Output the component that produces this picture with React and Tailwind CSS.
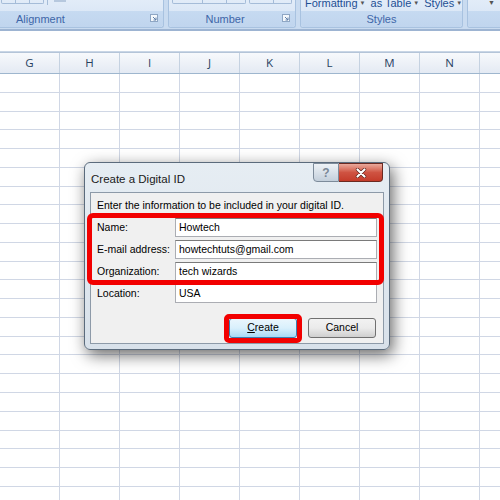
import React from 'react';

const cols = ['G', 'H', 'I', 'J', 'K', 'L', 'M', 'N', ''];
const rows = Array.from({ length: 23 });

const font = { fontFamily: '"Liberation Sans", Arial, sans-serif' };

const Launcher = ({ className }) => (
  <svg className={className} width="8" height="8" viewBox="0 0 8 8">
    <rect x="0.5" y="0.5" width="7" height="7" fill="#f4f8fc" stroke="#8ea6c4" />
    <path d="M3 3 L6 6 M6 3.5 V6 H3.5" stroke="#5f7fa8" strokeWidth="1" fill="none" />
  </svg>
);

const RibbonGroup = ({ label, className, labelClass = 'text-center', children, launcher }) => (
  <div className={`relative h-[28px] rounded-b-[3px] border border-t-0 border-[#a8c2e0] bg-gradient-to-b from-[#e2ecf8] to-[#d3e2f4] ${className}`}>
    {children}
    <div className={`absolute bottom-0 left-0 right-0 h-[16px] rounded-b-[3px] bg-gradient-to-b from-[#c6daf1] to-[#c0d5ee] text-[11px] leading-[16px] text-[#3e66a8] ${labelClass}`}>
      {label}
    </div>
    {launcher && <Launcher className="absolute right-[5px] bottom-[5px]" />}
  </div>
);

const Ribbon = () => (
  <div className="h-[31px] bg-[#c9dbf0] border-b-2 border-[#9db4d2] flex gap-[4px] overflow-hidden" style={font}>
    <RibbonGroup label="Alignment" className="w-[168px] -ml-[4px] shrink-0" labelClass="pl-[19px]" launcher>
      <div className="absolute left-[4px] top-0 w-[43px] h-[4px] border border-t-0 border-[#a5bcd8] rounded-b-[2px] flex">
        <div className="w-[14px] border-r border-[#a5bcd8]" />
        <div className="w-[14px] border-r border-[#a5bcd8]" />
      </div>
      <div className="absolute left-[50px] top-0 w-px h-[5px] bg-[#a5bcd8]" />
      <div className="absolute left-[57px] top-0 w-[12px] h-[2px] bg-[#b6c8de]" />
    </RibbonGroup>
    <RibbonGroup label="Number" className="w-[128px] shrink-0" labelClass="text-center pr-[14px]" launcher>
      <div className="absolute left-[3px] top-0 w-[74px] h-[4px] border border-t-0 border-[#a5bcd8] rounded-b-[2px] flex">
        <div className="w-[30px] border-r border-[#a5bcd8]" />
        <div className="w-[24px] border-r border-[#a5bcd8]" />
      </div>
      <div className="absolute left-[80px] top-0 w-[43px] h-[4px] border border-t-0 border-[#a5bcd8] rounded-b-[2px] flex">
        <div className="w-[24px] border-r border-[#a5bcd8]" />
      </div>
    </RibbonGroup>
    <RibbonGroup label="Styles" className="w-[163px] shrink-0">
      <div className="absolute left-[4px] top-[-4px] flex items-center gap-[2px] text-[11px] leading-[14px] text-[#1e4f94] whitespace-nowrap">
        <span>Formatting</span>
        <span className="text-[6px] text-[#555]">▼</span>
        <span className="ml-[3px]">as Table</span>
        <span className="text-[6px] text-[#555]">▼</span>
        <span className="ml-[3px]">Styles</span>
        <span className="text-[6px] text-[#555]">▼</span>
      </div>
    </RibbonGroup>
    <RibbonGroup label="" className="w-[60px] shrink-0">
      <div className="absolute left-[20px] top-[-2px] text-[7px] text-[#555]">▼</div>
    </RibbonGroup>
  </div>
);

const Sheet = () => (
  <div style={{ fontFamily: '"Open Sans", Arial, sans-serif' }}>
    <div className="h-[20px] bg-white" />
    <div className="h-[2px] bg-[#b4c4d8] border-t border-[#c9d6e6]" />
    <div className="flex h-[21px] border-b border-[#9eb6ce] bg-gradient-to-b from-[#f7f9fc] to-[#e4eaf3]">
      {cols.map((c, i) => (
        <div key={i} className="w-[60px] shrink-0 border-r border-[#c5d2e1] flex items-center justify-center text-[11.5px] text-[#27415f]">
          {c}
        </div>
      ))}
    </div>
    {rows.map((_, r) => (
      <div key={r} className="flex h-[18.78px] border-b border-[#d0d7e5] bg-white">
        {cols.map((c, i) => (
          <div key={i} className="w-[60px] shrink-0 border-r border-[#d0d7e5]" />
        ))}
      </div>
    ))}
  </div>
);

const Field = ({ label, value }) => (
  <div className="flex items-center h-[19px]">
    <div className="w-[78px] shrink-0 text-[10.5px] text-black">{label}</div>
    <div className="flex-1 h-[19px] bg-white border border-[#abadb3] border-t-[#7a7a7a] px-[3px] flex items-center text-[10.5px] text-black">
      {value}
    </div>
  </div>
);

const Dialog = () => (
  <div
    className="absolute left-[84px] top-[162px] w-[306px] h-[188px] rounded-[6px] border border-[#5b6b7c] bg-gradient-to-b from-[#e6edf3] to-[#d8e1ea] shadow-[3px_5px_16px_rgba(0,0,0,0.6)]"
    style={font}
  >
    <div className="h-[29px] flex items-start">
      <div className="pl-[6px] pt-[8px] text-[11.5px] text-[#1a1a1a] flex-1">Create a Digital ID</div>
      <div className="flex mr-[6px]">
        <div className="w-[26px] h-[19px] rounded-bl-[4px] border border-[#7d8b9a] bg-gradient-to-b from-[#eef2f6] to-[#c3cfdb] flex items-center justify-center text-[12px] font-bold text-[#7a8796]">
          ?
        </div>
        <div className="w-[44px] h-[19px] rounded-br-[4px] border border-l-0 border-[#6b2a22] bg-gradient-to-b from-[#e9a99c] via-[#cf5342] to-[#c43b2a] flex items-center justify-center">
          <svg width="12" height="10" viewBox="0 0 12 10">
            <path d="M2.5 1.5 L9.5 8.5 M9.5 1.5 L2.5 8.5" stroke="#5a1e16" strokeWidth="3.4" strokeLinecap="round" />
            <path d="M2.5 1.5 L9.5 8.5 M9.5 1.5 L2.5 8.5" stroke="#ffffff" strokeWidth="2.2" strokeLinecap="round" />
          </svg>
        </div>
      </div>
    </div>
    <div className="mx-[5px] h-[152px] bg-[#f0f0f0] border border-[#8d9aa8] px-[6px] pt-[6px] flex flex-col">
      <div className="text-[10.5px] leading-[12px] text-black">Enter the information to be included in your digital ID.</div>
      <div className="mt-[7px] flex flex-col gap-[3px]">
        <Field label="Name:" value="Howtech" />
        <Field label="E-mail address:" value="howtechtuts@gmail.com" />
        <Field label="Organization:" value="tech wizards" />
        <Field label="Location:" value="USA" />
      </div>
      <div className="mt-[15px] flex justify-end gap-[11px] pr-[1px]">
        <div className="w-[68px] h-[20px] rounded-[3px] border border-[#3c7fb1] bg-gradient-to-b from-[#eaf6fd] via-[#d9f0fc] to-[#a7d9f5] flex items-center justify-center text-[10.5px] text-black">
          <span><span className="underline">C</span>reate</span>
        </div>
        <div className="w-[68px] h-[20px] rounded-[3px] border border-[#707070] bg-gradient-to-b from-[#f2f2f2] via-[#ebebeb] to-[#cfcfcf] flex items-center justify-center text-[10.5px] text-black">
          Cancel
        </div>
      </div>
    </div>
    {/* red highlight marks */}
    <div className="absolute left-[2px] top-[50px] w-[297px] h-[72px] rounded-[6px] border-[5px] border-[#f20000]" />
    <div className="absolute left-[139px] top-[151px] w-[78px] h-[29px] rounded-[5px] border-[5px] border-[#f20000]" />
  </div>
);

export default function App() {
  return (
    <div className="relative w-[500px] h-[500px] overflow-hidden bg-white">
      <Ribbon />
      <Sheet />
      <Dialog />
    </div>
  );
}
